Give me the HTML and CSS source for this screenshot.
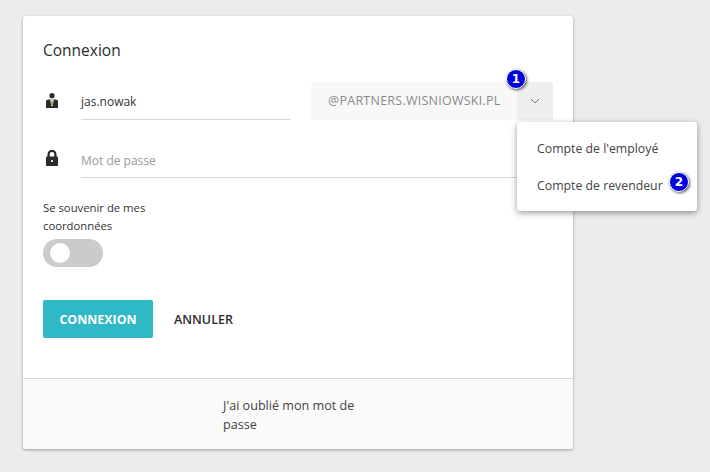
FILE: index.html
```html
<!DOCTYPE html>
<html>
<head>
  <meta charset="utf-8">
  <title>Connexion</title>
  <link rel="stylesheet" href="styles.css">
</head>
<body>
  <div class="card">
    <div class="card-body">
      <h1>Connexion</h1>

      <div class="row row-login">
        <svg class="icon" width="12" height="15" viewBox="0 0 12 15">
          <circle cx="6" cy="2.7" r="2.6" fill="#2b2b2b"/>
          <path d="M0 15V8.6C0 7.2 1 6.4 2.4 6.4H9.6C11 6.4 12 7.2 12 8.6V15Z" fill="#2b2b2b"/>
          <path d="M4.2 6.4H7.8L6.8 12.5 6 13.5 5.2 12.5Z" fill="#fff"/>
          <path d="M5.4 7.2H6.6L6.9 11.5 6 12.8 5.1 11.5Z" fill="#b8923f"/>
        </svg>
        <div class="field field-user">jas.nowak</div>
        <div class="domain">
          <span class="domain-name">@PARTNERS.WISNIOWSKI.PL</span>
          <span class="domain-toggle">
            <svg width="10" height="6" viewBox="0 0 10 6"><path d="M1 1L5 5 9 1" fill="none" stroke="#777" stroke-width="1"/></svg>
          </span>
        </div>
      </div>

      <div class="row row-password">
        <svg class="icon" width="12" height="16" viewBox="0 0 12 16">
          <path d="M2.6 7V4.2a3.4 3.4 0 0 1 6.8 0V7" fill="none" stroke="#2b2b2b" stroke-width="2.2"/>
          <path d="M1 6.5H11C11.6 6.5 12 6.9 12 7.5V15C12 15.6 11.6 16 11 16H1C.4 16 0 15.6 0 15V7.5C0 6.9 .4 6.5 1 6.5Z" fill="#2b2b2b"/>
          <rect x="5" y="10" width="2" height="2" fill="#ddd"/>
        </svg>
        <div class="field field-password">Mot de passe</div>
      </div>

      <div class="remember">Se souvenir de mes coordonnées</div>
      <div class="switch"><span class="switch-knob"></span></div>

      <div class="actions">
        <a class="btn btn-primary" href="#">CONNEXION</a>
        <a class="btn btn-link" href="#">ANNULER</a>
      </div>
    </div>

    <div class="card-footer">
      <a class="forgot" href="#">J'ai oublié mon mot de passe</a>
    </div>
  </div>

  <ul class="menu">
    <li>Compte de l'employé</li>
    <li>Compte de revendeur</li>
  </ul>

  <span class="badge badge-one">1</span>
  <span class="badge badge-two">2</span>
</body>
</html>
```

FILE: styles.css
```css
html, body {
  height: 100%;
}

body {
  margin: 0;
  padding: 16px 0 0 23px;
  box-sizing: border-box;
  background: #ececec;
  font-family: "Open Sans", "Noto Sans", Arial, sans-serif;
  font-size: 12px;
  color: #333;
  overflow: hidden;
}

a {
  text-decoration: none;
}

.card {
  width: 550px;
  background: #fff;
  border-radius: 3px;
  box-shadow: 0 1px 3px rgba(0, 0, 0, 0.35);
}

.card-body {
  height: 362px;
  padding: 0 20px;
  box-sizing: border-box;
  overflow: hidden;
}

h1 {
  margin: 25px 0 0;
  font-size: 15.5px;
  font-weight: 400;
  line-height: 19px;
  color: #2b2b2b;
}

.row {
  display: flex;
}

.row-login {
  margin-top: 22px;
  height: 38px;
}

.row-password {
  margin-top: 20px;
  height: 38px;
}

.icon {
  flex: none;
  margin: 11px 23px 0 3px;
}

.row-password .icon {
  margin-top: 10px;
}

.field {
  height: 38px;
  box-sizing: border-box;
  border-bottom: 1px solid #d8d8d8;
  font-size: 12px;
}

.field-user {
  flex: none;
  width: 210px;
  margin-right: 20px;
  line-height: 39px;
  color: #333;
}

.field-password {
  flex: 1;
  line-height: 41px;
  color: #999;
}

.domain {
  display: flex;
  flex: 1;
  height: 38px;
  background: #f8f8f8;
  border-radius: 3px;
  line-height: 38px;
  color: #8a8a8a;
  overflow: hidden;
}

.domain-name {
  flex: 1;
  padding-left: 17px;
  font-size: 12.5px;
  letter-spacing: 0.25px;
}

.domain-toggle {
  display: flex;
  align-items: center;
  justify-content: center;
  width: 36px;
  background: #efefef;
}

.remember {
  width: 130px;
  margin-top: 21px;
  font-size: 11.3px;
  line-height: 18px;
  color: #333;
}

.switch {
  width: 60px;
  height: 28px;
  margin-top: 4px;
  padding: 4px 7px;
  box-sizing: border-box;
  background: #cbcbcb;
  border-radius: 14px;
}

.switch-knob {
  display: block;
  width: 20px;
  height: 20px;
  background: #fff;
  border-radius: 50%;
}

.actions {
  display: flex;
  align-items: center;
  margin-top: 33px;
}

.btn {
  height: 38px;
  font-size: 12.4px;
  line-height: 39px;
}

.btn-primary {
  width: 110px;
  background: #2fb8c6;
  border-radius: 2px;
  color: #fff;
  font-weight: 700;
  text-align: center;
}

.btn-link {
  margin-left: 21px;
  font-size: 12.5px;
  color: #2b2b2b;
  font-weight: 600;
}

.card-footer {
  height: 71px;
  padding: 17px 0 0 200px;
  box-sizing: border-box;
  background: #fafafa;
  border-top: 1px solid #d8d8d8;
  border-radius: 0 0 3px 3px;
}

.forgot {
  display: block;
  width: 150px;
  font-size: 12.6px;
  line-height: 19px;
  color: #444;
}

.menu {
  position: absolute;
  left: 517px;
  top: 122px;
  width: 180px;
  height: 89px;
  margin: 0;
  padding: 9px 0 0 20px;
  box-sizing: border-box;
  list-style: none;
  background: #fff;
  border-radius: 3px;
  box-shadow: 0 2px 6px rgba(0, 0, 0, 0.4);
}

.menu li {
  height: 37px;
  line-height: 36px;
  font-size: 12.3px;
  color: #444;
}

.badge {
  position: absolute;
  width: 18px;
  height: 18px;
  border: 1.5px solid #fff;
  border-radius: 50%;
  background: #0000e0;
  box-shadow: 1px 1px 3px rgba(0, 0, 0, 0.7);
  color: #fff;
  font-family: "DejaVu Sans", sans-serif;
  font-size: 12px;
  font-weight: 700;
  line-height: 18px;
  text-align: center;
}

.badge-one {
  left: 506px;
  top: 69px;
}

.badge-two {
  left: 669px;
  top: 172px;
}
```
